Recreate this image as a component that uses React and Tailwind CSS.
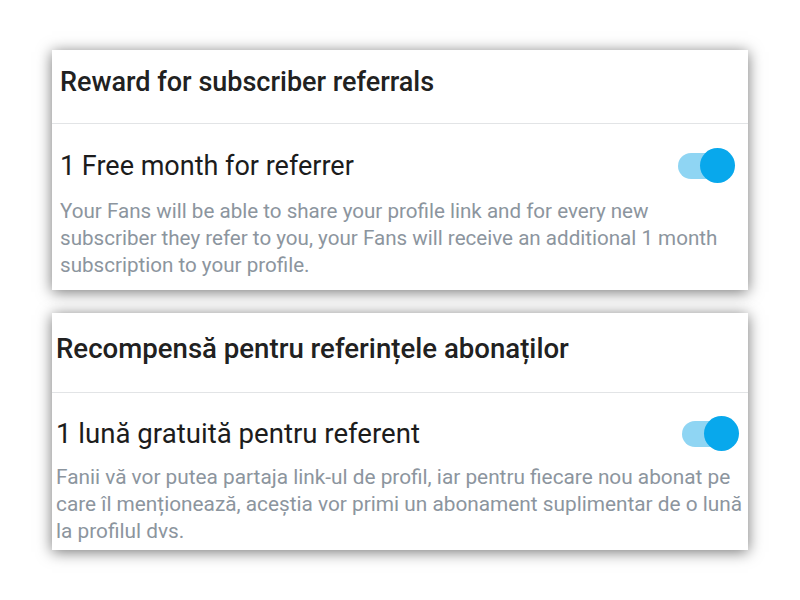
import React from "react";

const cards = [
  {
    title: "Reward for subscriber referrals",
    label: "1 Free month for referrer",
    text: "Your Fans will be able to share your profile link and for every new subscriber they refer to you, your Fans will receive an additional 1 month subscription to your profile.",
    pad: "pl-[8px] pr-[13px]",
    head: "h-[73px] pb-[8px]",
    big: "text-[27px]",
    small: "text-[20.6px]",
    row: "pt-[24px]",
    desc: "mt-[15px] pb-[11px]",
  },
  {
    title: "Recompensă pentru referințele abonaților",
    label: "1 lună gratuită pentru referent",
    text: "Fanii vă vor putea partaja link-ul de profil, iar pentru fiecare nou abonat pe care îl menționează, aceștia vor primi un abonament suplimentar de o lună la profilul dvs.",
    pad: "pl-[4px] pr-[9px]",
    head: "h-[79px] pb-[8px]",
    big: "text-[27.6px]",
    small: "text-[20.8px]",
    row: "pt-[23px]",
    desc: "mt-[13px] -mr-[8px] pb-[5px]",
  },
];

function Toggle() {
  return (
    <div className="relative h-[35px] w-[57px] shrink-0">
      <div className="absolute left-0 top-[5px] h-[26px] w-[46px] rounded-full bg-[#8fd5f3]" />
      <div className="absolute right-0 top-0 h-[35px] w-[35px] rounded-full bg-[#08a8ec]" />
    </div>
  );
}

function Card({ c }) {
  return (
    <div className="w-[696px] bg-white shadow-[0_2px_14px_rgba(0,0,0,0.55)]">
      <div className={`flex items-center ${c.head} ${c.pad}`}>
        <h2 className={`${c.big} font-medium text-[#212121]`}>{c.title}</h2>
      </div>
      <div className="h-px bg-[#e2e4e6]" />
      <div className={c.pad}>
        <div className={`flex items-center justify-between ${c.row}`}>
          <span className={`${c.big} leading-[34px] text-[#1c1c1c]`}>{c.label}</span>
          <Toggle />
        </div>
        <p className={`${c.small} leading-[27px] text-[#8c959e] ${c.desc}`}>{c.text}</p>
      </div>
    </div>
  );
}

export default function App() {
  return (
    <div className="flex h-[600px] w-[800px] flex-col items-start gap-[23px] bg-white pl-[52px] pt-[50px] font-['Roboto',sans-serif]">
      {cards.map((c) => (
        <Card key={c.title} c={c} />
      ))}
    </div>
  );
}
